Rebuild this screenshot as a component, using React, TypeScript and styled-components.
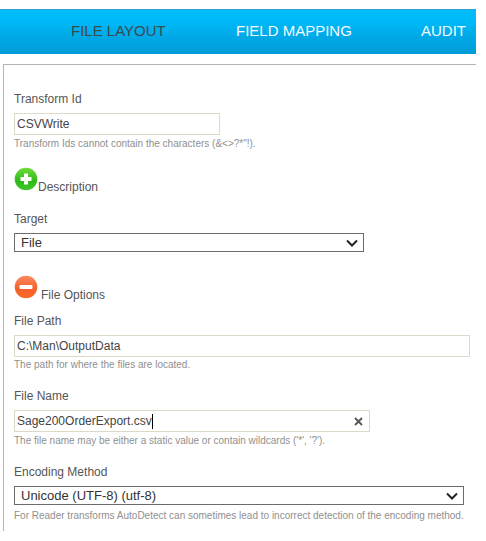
import React from 'react';
import styled, { createGlobalStyle } from 'styled-components';

const GlobalStyle = createGlobalStyle`
  html, body {
    margin: 0;
    padding: 0;
    background: #fff;
    font-family: "Liberation Sans", Arial, sans-serif;
  }
`;

const Page = styled.div`
  width: 476px;
  padding-top: 9px;
`;

const TabBar = styled.div`
  display: flex;
  align-items: center;
  height: 45px;
  padding: 0 0 3px 71px;
  box-sizing: border-box;
  border-top: 1px solid #2f9fd6;
  background: linear-gradient(to bottom, #00bcf8 0%, #00bbfa 22%, #00a9e6 60%, #009bd9 100%);
`;

const Tab = styled.div<{ $active?: boolean; $width: number }>`
  width: ${props => props.$width}px;
  font-size: 15px;
  white-space: nowrap;
  color: ${props => (props.$active ? '#3d4a50' : '#f2fbff')};
`;

const Panel = styled.div`
  margin: 10px 0 0 3px;
  height: 467px;
  box-sizing: border-box;
  border-top: 1px solid #b4b4b4;
  border-left: 1px solid #b4b4b4;
  padding: 27px 0 0 10px;
`;

const Label = styled.div`
  font-size: 12px;
  line-height: 14px;
  color: #555;
`;

const TextField = styled.div<{ $width: number }>`
  position: relative;
  display: flex;
  align-items: center;
  box-sizing: border-box;
  width: ${props => props.$width}px;
  height: 22px;
  margin-top: 7px;
  padding-left: 2px;
  border: 1px solid #dcd9c6;
  font-size: 12px;
  color: #444;
`;

const Caret = styled.span`
  display: inline-block;
  width: 1px;
  height: 15px;
  background: #000;
`;

const ClearIcon = styled.svg`
  position: absolute;
  right: 6px;
  top: 6px;
  width: 9px;
  height: 9px;
`;

const Hint = styled.div<{ $top?: number }>`
  margin-top: ${props => props.$top ?? 2}px;
  font-size: 10px;
  line-height: 14px;
  white-space: nowrap;
  color: #8f8f8f;
`;

const SelectBox = styled.div<{ $width: number }>`
  position: relative;
  box-sizing: border-box;
  display: flex;
  align-items: center;
  width: ${props => props.$width}px;
  height: 19px;
  margin-top: 7px;
  padding-left: 6px;
  border: 1px solid #6b6b6b;
  font-size: 13px;
  color: #333;
`;

const Chevron = styled.svg`
  position: absolute;
  right: 5px;
  top: 5px;
  width: 12px;
  height: 8px;
`;

const ToggleRow = styled.div<{ $gap: number }>`
  display: flex;
  align-items: flex-end;
  gap: ${props => props.$gap}px;
  font-size: 12px;
  line-height: 14px;
  color: #555;
`;

const ToggleLabel = styled.span<{ $drop: number }>`
  position: relative;
  top: ${props => props.$drop}px;
`;

const Group = styled.div<{ $top: number }>`
  margin-top: ${props => props.$top}px;
`;

const PlusIcon = () => (
  <svg width="24" height="24" viewBox="0 0 24 24">
    <defs>
      <linearGradient id="plusFill" x1="0" y1="0" x2="0" y2="1">
        <stop offset="0" stopColor="#6fdc3a" />
        <stop offset="0.6" stopColor="#2fb81c" />
        <stop offset="1" stopColor="#3ec82a" />
      </linearGradient>
    </defs>
    <circle cx="12" cy="12" r="11.3" fill="url(#plusFill)" />
    <path d="M10 6.500h4v3.500h3.500v4H14v3.500h-4V14H6.500v-4H10z" fill="#fff" />
  </svg>
);

const MinusIcon = () => (
  <svg width="24" height="24" viewBox="0 0 24 24">
    <defs>
      <linearGradient id="minusFill" x1="0" y1="0" x2="0" y2="1">
        <stop offset="0" stopColor="#fb8a60" />
        <stop offset="0.6" stopColor="#f5602a" />
        <stop offset="1" stopColor="#fb6a2c" />
      </linearGradient>
    </defs>
    <circle cx="12" cy="12" r="11.3" fill="url(#minusFill)" />
    <rect x="5.500" y="10" width="13" height="4" rx="1" fill="#fff" />
  </svg>
);

const DownArrow = () => (
  <Chevron viewBox="0 0 12 8">
    <path d="M1 1.500l5 5 5-5" fill="none" stroke="#222" strokeWidth="2" />
  </Chevron>
);

export default function App() {
  return (
    <Page>
      <GlobalStyle />
      <TabBar>
        <Tab $active $width={165}>FILE LAYOUT</Tab>
        <Tab $width={185}>FIELD MAPPING</Tab>
        <Tab $width={50}>AUDIT</Tab>
      </TabBar>
      <Panel>
        <Label>Transform Id</Label>
        <TextField $width={206}>CSVWrite</TextField>
        <Hint>Transform Ids cannot contain the characters (&amp;&lt;&gt;?*"!).</Hint>

        <Group $top={16}>
          <ToggleRow $gap={0}>
            <PlusIcon />
            <ToggleLabel $drop={3}>Description</ToggleLabel>
          </ToggleRow>
        </Group>

        <Group $top={21}>
          <Label>Target</Label>
          <SelectBox $width={350}>
            File
            <DownArrow />
          </SelectBox>
        </Group>

        <Group $top={23}>
          <ToggleRow $gap={3}>
            <MinusIcon />
            <ToggleLabel $drop={3}>File Options</ToggleLabel>
          </ToggleRow>
        </Group>

        <Group $top={15}>
          <Label>File Path</Label>
          <TextField $width={456}>C:\Man\OutputData</TextField>
          <Hint $top={1}>The path for where the files are located.</Hint>
        </Group>

        <Group $top={17}>
          <Label>File Name</Label>
          <TextField $width={356}>
            Sage200OrderExport.csv<Caret />
            <ClearIcon viewBox="0 0 9 9">
              <path d="M1 1l7 7M8 1l-7 7" fill="none" stroke="#555" strokeWidth="1.800" />
            </ClearIcon>
          </TextField>
          <Hint>The file name may be either a static value or contain wildcards ('*', '?').</Hint>
        </Group>

        <Group $top={17}>
          <Label>Encoding Method</Label>
          <SelectBox $width={450}>
            Unicode (UTF-8) (utf-8)
            <DownArrow />
          </SelectBox>
          <Hint $top={4}>For Reader transforms AutoDetect can sometimes lead to incorrect detection of the encoding method.</Hint>
        </Group>
      </Panel>
    </Page>
  );
}
